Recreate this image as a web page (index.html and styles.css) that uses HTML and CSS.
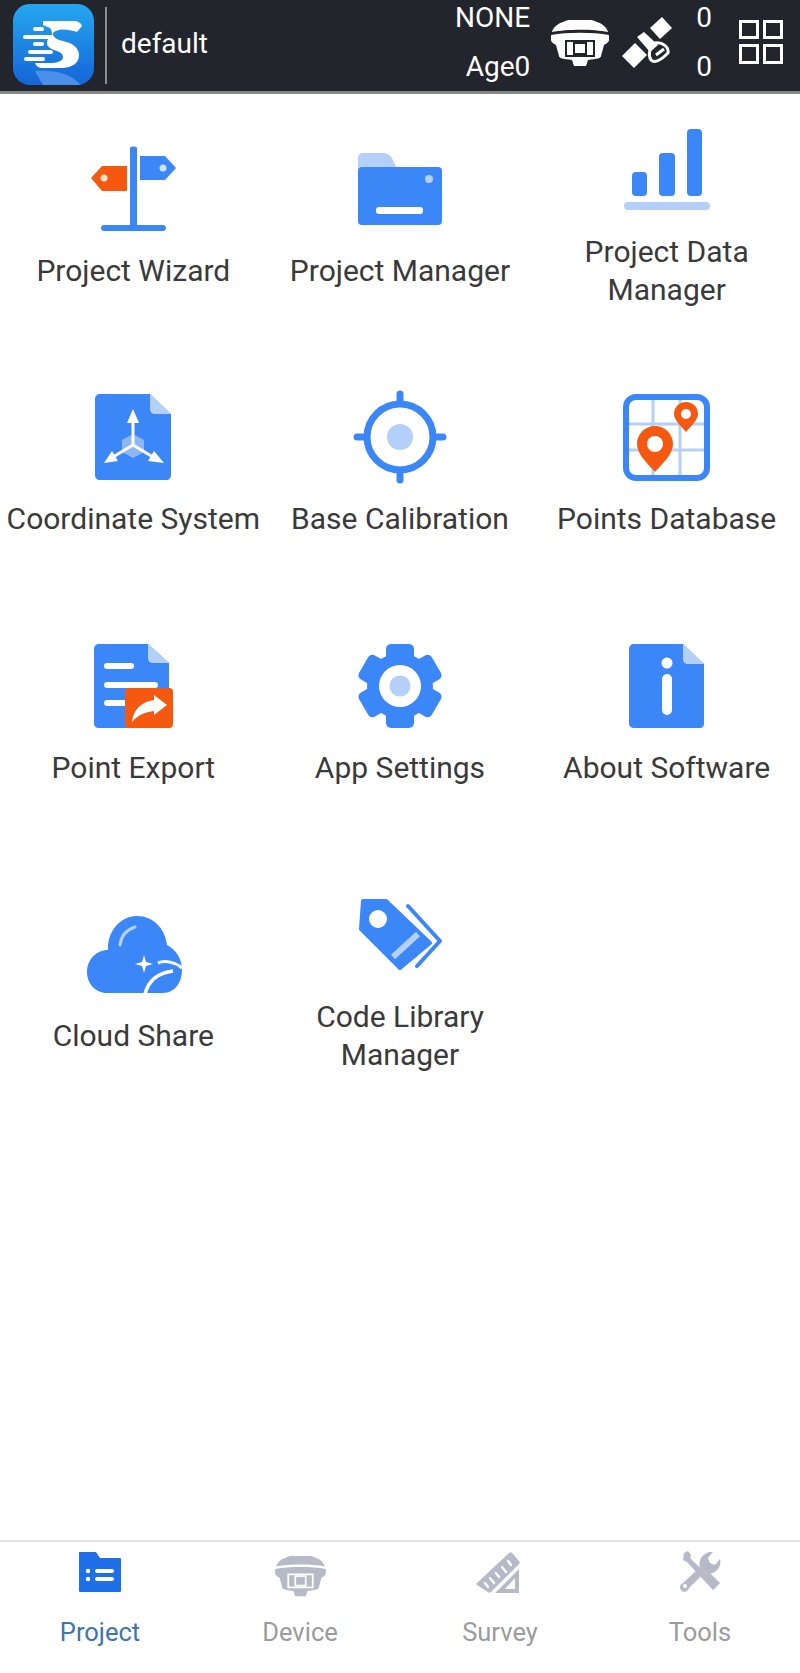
FILE: index.html
```html
<!DOCTYPE html>
<html lang="en">
<head>
    <meta charset="UTF-8">
    <meta name="viewport" content="width=device-width, initial-scale=1.0">
    <title>Project</title>
    <link rel="stylesheet" href="styles.css">
</head>
<body>
    <svg class="defs" width="0" height="0">
        <symbol id="rover" viewBox="0 0 58 47">
            <path fill="currentColor" d="M1 12 C2 8 6 4 12 2 C14 1 16 0 18 0 H40 C42 0 44 1 46 2 C52 4 56 8 57 12 C42 9 16 9 1 12 Z"/>
            <path fill="currentColor" d="M0 15 C16 12 42 12 58 15 V20 C58 22 55 24 53 25 L50 36 C50 38 46 39 37 40 L35 46 H23 L21 40 C12 39 8 38 8 36 L5 25 C3 24 0 22 0 20 Z"/>
            <rect class="cut" x="15" y="21" width="28" height="15"/>
            <rect class="cut" x="23" y="23" width="12" height="11"/>
        </symbol>
    </svg>

    <header class="topbar">
        <svg class="logo" viewBox="0 0 81 81">
            <defs>
                <linearGradient id="logoBg" x1="0" y1="0" x2="0" y2="1">
                    <stop offset="0" stop-color="#26a7ef"/>
                    <stop offset="1" stop-color="#1565d8"/>
                </linearGradient>
            </defs>
            <rect width="81" height="81" rx="17" fill="url(#logoBg)"/>
            <path fill="#4a90ea" d="M22 67 C40 66 56 68 68 81 H30 Z"/>
            <path fill="#fff" d="M30 17 H60 C65 17 68 19 69 22 L64 28 C58 26 50 25 46 26 C41 27 39 29 40 31 C42 35 46 36 50 37 C60 39 66 44 66 51 C66 59 60 63 50 64 H30 C26 64 23 62 22 59 H37 C44 59 50 57 50 53 C50 50 47 48 44 47 C38 45 34 43 34 39 C34 35 37 33 39 31 C39 27 38 25 37 24 L30 21 Z"/>
            <g stroke="#fff" stroke-width="4" stroke-linecap="round">
                <path d="M22 25 H29"/>
                <path d="M12 33 H38"/>
                <path d="M22 40 H29"/>
                <path d="M17 48 H38"/>
                <path d="M13 55 H30"/>
            </g>
        </svg>
        <div class="sep"></div>
        <div class="project-name">default</div>
        <div class="status">
            <span>NONE</span>
            <span>Age0</span>
        </div>
        <svg class="rover-top"><use href="#rover"/></svg>
        <svg class="sat" viewBox="0 0 50 51">
            <g fill="#fff">
                <path d="M28 11 L40 0 L50 11 L38 22 Z"/>
                <path d="M0 39 L13 26 L25 38 L12 51 Z"/>
                <path d="M15 20 L22 15 L36 28 L28 35 Z"/>
            </g>
            <path fill="none" stroke="#fff" stroke-width="3" d="M33 26 C41 25 47 30 46 36 C40 42 33 47 29 43 C26 38 27 31 33 26 Z"/>
            <path fill="none" stroke="#fff" stroke-width="3" d="M34 38 L42 32"/>
        </svg>
        <div class="counts">
            <span>0</span>
            <span>0</span>
        </div>
        <svg class="apps" viewBox="0 0 44 44">
            <g fill="none" stroke="#fff" stroke-width="3">
                <rect x="1.5" y="1.5" width="17" height="16"/>
                <rect x="25.5" y="1.5" width="17" height="16"/>
                <rect x="1.5" y="25.5" width="17" height="17"/>
                <rect x="25.5" y="25.5" width="17" height="17"/>
            </g>
        </svg>
    </header>

    <main class="menu">
        <a class="item">
            <div class="icon">
                <svg viewBox="0 0 100 100">
                    <path fill="#3c87f7" d="M47 9 C47 7 54 7 54 9 V86 H80 C84 86 84 92 80 92 H21 C17 92 17 86 21 86 H47 Z"/>
                    <path fill="#f4590f" d="M19 27 H44 V52 H19 L8 39 Z"/>
                    <circle cx="21" cy="39" r="3.5" fill="#ffe3c8"/>
                    <path fill="#3c87f7" d="M57 17 H82 L93 29 L82 41 H57 Z"/>
                    <circle cx="80" cy="29" r="3.5" fill="#cfe2fc"/>
                </svg>
            </div>
            <span class="label">Project Wizard</span>
        </a>
        <a class="item">
            <div class="icon">
                <svg viewBox="0 0 100 100">
                    <path fill="#b4cff8" d="M8 32 V19 C8 16 10 14 13 14 H33 C37 14 40 16 42 19 L47 30 Z"/>
                    <rect x="8" y="28" width="84" height="58" rx="4" fill="#3c87f7"/>
                    <circle cx="79" cy="40" r="4" fill="#b4cff8"/>
                    <rect x="26" y="68" width="47" height="7" rx="3" fill="#fff"/>
                </svg>
            </div>
            <span class="label">Project Manager</span>
        </a>
        <a class="item">
            <div class="icon">
                <svg viewBox="0 0 100 100">
                    <rect x="15" y="52" width="15" height="24" rx="4" fill="#3c87f7"/>
                    <rect x="42" y="33" width="16" height="43" rx="4" fill="#3c87f7"/>
                    <rect x="70" y="9" width="15" height="67" rx="4" fill="#3c87f7"/>
                    <rect x="7" y="82" width="86" height="8" rx="4" fill="#b4cff8"/>
                </svg>
            </div>
            <span class="label">Project Data<br>Manager</span>
        </a>

        <a class="item">
            <div class="icon">
                <svg viewBox="0 0 100 100">
                    <path fill="#3c87f7" d="M17 7 H67 L88 27 V88 C88 91 86 93 83 93 H17 C14 93 12 91 12 88 V12 C12 9 14 7 17 7 Z"/>
                    <path fill="#b4cff8" d="M67 7 L88 27 H72 C69 27 67 25 67 22 Z"/>
                    <path fill="#8fb7f5" d="M50 47 L61 53 V65 L50 71 L39 65 V53 Z"/>
                    <g stroke="#fff" stroke-width="3" stroke-linecap="round">
                        <path d="M50 32 V58"/>
                        <path d="M50 58 L30 70"/>
                        <path d="M50 58 L70 70"/>
                    </g>
                    <g fill="#fff">
                        <path d="M50 22 L56 36 H44 Z"/>
                        <path d="M21 76 L29 64 L35 74 Z"/>
                        <path d="M81 76 L71 64 L65 74 Z"/>
                    </g>
                </svg>
            </div>
            <span class="label">Coordinate System</span>
        </a>
        <a class="item">
            <div class="icon">
                <svg viewBox="0 0 100 100">
                    <circle cx="50" cy="50" r="33" fill="none" stroke="#3c87f7" stroke-width="7"/>
                    <circle cx="50" cy="50" r="13" fill="#b4cff8"/>
                    <g stroke="#3c87f7" stroke-width="7" stroke-linecap="round">
                        <path d="M50 7 V16"/>
                        <path d="M50 84 V93"/>
                        <path d="M7 50 H16"/>
                        <path d="M84 50 H93"/>
                    </g>
                </svg>
            </div>
            <span class="label">Base Calibration</span>
        </a>
        <a class="item">
            <div class="icon">
                <svg viewBox="0 0 100 100">
                    <g stroke="#b4cff8" stroke-width="3">
                        <path d="M36 9 V91"/>
                        <path d="M63 9 V91"/>
                        <path d="M8 37 H91"/>
                        <path d="M8 63 H91"/>
                    </g>
                    <rect x="9" y="10" width="81" height="81" rx="10" fill="none" stroke="#3c87f7" stroke-width="6"/>
                    <path fill="#f4590f" d="M38 39 C48 39 56 47 56 57 C56 67 46 76 38 85 C30 76 20 67 20 57 C20 47 28 39 38 39 Z"/>
                    <circle cx="38" cy="57" r="8" fill="#fff"/>
                    <path fill="#f4590f" d="M69 15 C76 15 81 20 81 27 C81 33 74 39 69 45 C64 39 57 33 57 27 C57 20 62 15 69 15 Z"/>
                    <circle cx="69" cy="27" r="5" fill="#fff"/>
                </svg>
            </div>
            <span class="label">Points Database</span>
        </a>

        <a class="item">
            <div class="icon">
                <svg viewBox="0 0 100 100">
                    <path fill="#3c87f7" d="M16 8 H65 L86 27 V88 C86 90 84 92 82 92 H16 C13 92 11 90 11 88 V13 C11 10 13 8 16 8 Z"/>
                    <path fill="#b4cff8" d="M65 8 L86 27 H70 C67 27 65 25 65 22 Z"/>
                    <g stroke="#fff" stroke-width="6" stroke-linecap="round">
                        <path d="M24 30 H48"/>
                        <path d="M24 49 H72"/>
                        <path d="M24 67 H42"/>
                    </g>
                    <rect x="42" y="52" width="48" height="40" rx="4" fill="#f4590f"/>
                    <path fill="#fff" d="M84 69 L71 59 V64 C58 66 50 74 49 86 C55 79 62 76 71 75 V79 Z"/>
                </svg>
            </div>
            <span class="label">Point Export</span>
        </a>
        <a class="item">
            <div class="icon">
                <svg viewBox="0 0 100 100">
                    <g fill="#3c87f7">
                        <circle cx="50" cy="50" r="33"/>
                        <rect x="36" y="8" width="28" height="20" rx="5"/>
                        <rect x="36" y="8" width="28" height="20" rx="5" transform="rotate(60 50 50)"/>
                        <rect x="36" y="8" width="28" height="20" rx="5" transform="rotate(120 50 50)"/>
                        <rect x="36" y="8" width="28" height="20" rx="5" transform="rotate(180 50 50)"/>
                        <rect x="36" y="8" width="28" height="20" rx="5" transform="rotate(240 50 50)"/>
                        <rect x="36" y="8" width="28" height="20" rx="5" transform="rotate(300 50 50)"/>
                    </g>
                    <circle cx="50" cy="50" r="21" fill="#fff"/>
                    <circle cx="50" cy="50" r="10.5" fill="#b4cff8"/>
                </svg>
            </div>
            <span class="label">App Settings</span>
        </a>
        <a class="item">
            <div class="icon">
                <svg viewBox="0 0 100 100">
                    <path fill="#3c87f7" d="M17 8 H66 L87 28 V88 C87 90 85 92 83 92 H17 C14 92 12 90 12 88 V13 C12 10 14 8 17 8 Z"/>
                    <path fill="#b4cff8" d="M66 8 L87 28 H71 C68 28 66 26 66 23 Z"/>
                    <circle cx="50" cy="27" r="5.5" fill="#fff"/>
                    <rect x="45" y="38" width="10" height="41" rx="5" fill="#fff"/>
                </svg>
            </div>
            <span class="label">About Software</span>
        </a>

        <a class="item">
            <div class="icon">
                <svg viewBox="0 0 100 100">
                    <path fill="#3c87f7" d="M24 89 C12 89 4 79 4 68 C4 56 13 46 25 46 C24 28 37 12 54 12 C70 12 82 24 84 41 C92 45 99 54 99 66 C99 78 92 89 80 89 Z"/>
                    <path fill="none" stroke="#b4cff8" stroke-width="3" stroke-linecap="round" d="M37 41 C38 32 43 26 52 23"/>
                    <path fill="#fff" d="M61 51 L63 58 L70 60 L63 62 L61 69 L59 62 L52 60 L59 58 Z"/>
                    <path fill="none" stroke="#fff" stroke-width="3.5" d="M62 90 C65 78 74 69 90 67"/>
                    <path fill="none" stroke="#fff" stroke-width="3" d="M75 59 C82 56 92 58 99 64"/>
                </svg>
            </div>
            <span class="label">Cloud Share</span>
        </a>
        <a class="item">
            <div class="icon">
                <svg viewBox="0 0 100 100">
                    <path fill="#3c87f7" stroke="#3c87f7" stroke-width="4" stroke-linejoin="round" d="M13 16 H36 L80 58 L50 83 L11 44 Z"/>
                    <circle cx="28" cy="34" r="9" fill="#fff"/>
                    <path stroke="#b4cff8" stroke-width="6" d="M68 49 L43 72"/>
                    <path fill="none" stroke="#3c87f7" stroke-width="4" stroke-linecap="round" stroke-linejoin="round" d="M58 21 L90 56 L67 81"/>
                </svg>
            </div>
            <span class="label">Code Library<br>Manager</span>
        </a>
    </main>

    <nav class="tabs">
        <a class="tab active">
            <svg viewBox="0 0 60 60">
                <path fill="#1f6fe8" d="M10 10 H26 L30 16 H50 C51 16 51 17 51 18 V48 C51 49 51 50 50 50 H10 C9 50 9 49 9 48 V11 C9 10 9 10 10 10 Z"/>
                <g fill="#fff">
                    <circle cx="18" cy="29" r="2.2"/>
                    <circle cx="18" cy="37" r="2.2"/>
                    <rect x="25" y="27" width="19" height="4" rx="2"/>
                    <rect x="25" y="35" width="19" height="4" rx="2"/>
                </g>
            </svg>
            <span>Project</span>
        </a>
        <a class="tab">
            <svg class="rover-tab"><use href="#rover"/></svg>
            <span>Device</span>
        </a>
        <a class="tab">
            <svg viewBox="0 0 60 60">
                <path fill="#b5bac6" d="M7 41 L39 11 C40 10 41 10 42 11 L49 19 C50 20 50 21 49 22 L21 50 C20 51 19 51 18 50 L7 43 C6 42 6 42 7 41 Z"/>
                <g stroke="#fff" stroke-width="2.4" stroke-linecap="round">
                    <path d="M38 19 L41 23"/>
                    <path d="M32 25 L36 30"/>
                    <path d="M26 31 L29 35"/>
                    <path d="M20 36 L24 41"/>
                    <path d="M15 41 L18 45"/>
                </g>
                <path fill="#b5bac6" fill-rule="evenodd" d="M49 27 V51 H25 Z M45 36 L35 47 H45 Z"/>
            </svg>
            <span>Survey</span>
        </a>
        <a class="tab">
            <svg viewBox="0 0 60 60">
                <g fill="#b5bac6">
                    <path d="M14 11 L18 9 L21 13 L20 16 L48 43 L43 48 L17 20 L13 18 Z"/>
                    <path d="M13 41 L28 27 L33 32 L19 46 A4.5 4.5 0 1 1 13 41 Z"/>
                    <path d="M30 26 C28 19 31 13 39 10 L43 10 L38 16 L40 21 L45 23 L50 17 C52 24 47 32 37 32 Z"/>
                    <path d="M34 35 L39 30 L50 41 L43 48 Z"/>
                </g>
                <circle cx="15" cy="44" r="2" fill="#fff"/>
            </svg>
            <span>Tools</span>
        </a>
    </nav>
</body>
</html>
```

FILE: styles.css
```css
body {
    font-family: Roboto, "Noto Sans", sans-serif;
    margin: 0;
    padding: 0;
    height: 1673px;
    display: flex;
    flex-direction: column;
    background-color: #fff;
    color: #3a3a3a;
    overflow: hidden;
}
.defs {
    display: block;
    height: 0;
}
.cut {
    fill: none;
    stroke: var(--cut);
    stroke-width: 2;
}

/* top bar */
.topbar {
    height: 91px;
    flex-shrink: 0;
    display: flex;
    align-items: center;
    background-color: #23252d;
    border-bottom: 3px solid #85868a;
    color: #fff;
    padding: 0 17px 0 13px;
}
.logo {
    width: 81px;
    height: 81px;
    margin-top: -2px;
}
.sep {
    width: 2px;
    height: 77px;
    margin-left: 11px;
    background-color: #8c8d90;
}
.project-name {
    flex: 1;
    margin: -5px 0 0 14px;
    font-size: 28px;
}
.status {
    display: flex;
    flex-direction: column;
    align-items: flex-end;
    justify-content: space-between;
    height: 85px;
    font-size: 28px;
    line-height: 36px;
    margin-top: -6px;
}
.rover-top {
    width: 58px;
    height: 47px;
    margin-left: 21px;
    margin-top: -4px;
    color: #fff;
    --cut: #23252d;
}
.sat {
    width: 50px;
    height: 51px;
    margin-left: 13px;
    margin-top: -6px;
}
.counts {
    display: flex;
    flex-direction: column;
    justify-content: space-between;
    height: 85px;
    font-size: 28px;
    line-height: 36px;
    margin-left: 24px;
    margin-top: -6px;
}
.apps {
    width: 44px;
    height: 44px;
    margin-left: 27px;
    margin-top: -8px;
}

/* icon menu */
.menu {
    flex: 1;
    display: grid;
    grid-template-columns: repeat(3, 1fr);
    grid-template-rows: 228px 267px 232px 304px;
    align-content: start;
}
.item {
    display: flex;
    flex-direction: column;
    align-items: center;
    justify-content: center;
    text-align: center;
}
.icon {
    height: 126px;
    display: flex;
    align-items: center;
}
.icon svg {
    display: block;
    width: 100px;
    height: 100px;
}
.label {
    font-size: 30px;
    line-height: 38px;
    white-space: nowrap;
}

/* bottom tabs */
.tabs {
    height: 131px;
    flex-shrink: 0;
    display: flex;
    border-top: 2px solid #e2e2e4;
}
.tab {
    flex: 1;
    display: flex;
    flex-direction: column;
    align-items: center;
    color: #9b9b9d;
    font-size: 25.5px;
    line-height: 36px;
}
.tab svg {
    display: block;
    width: 60px;
    height: 60px;
    margin-bottom: 12px;
}
.tab .rover-tab {
    width: 51px;
    height: 41px;
    margin: 14px 0 17px;
    color: #b5bac6;
    --cut: #fff;
}
.tab.active {
    color: #3f74a8;
}
```
